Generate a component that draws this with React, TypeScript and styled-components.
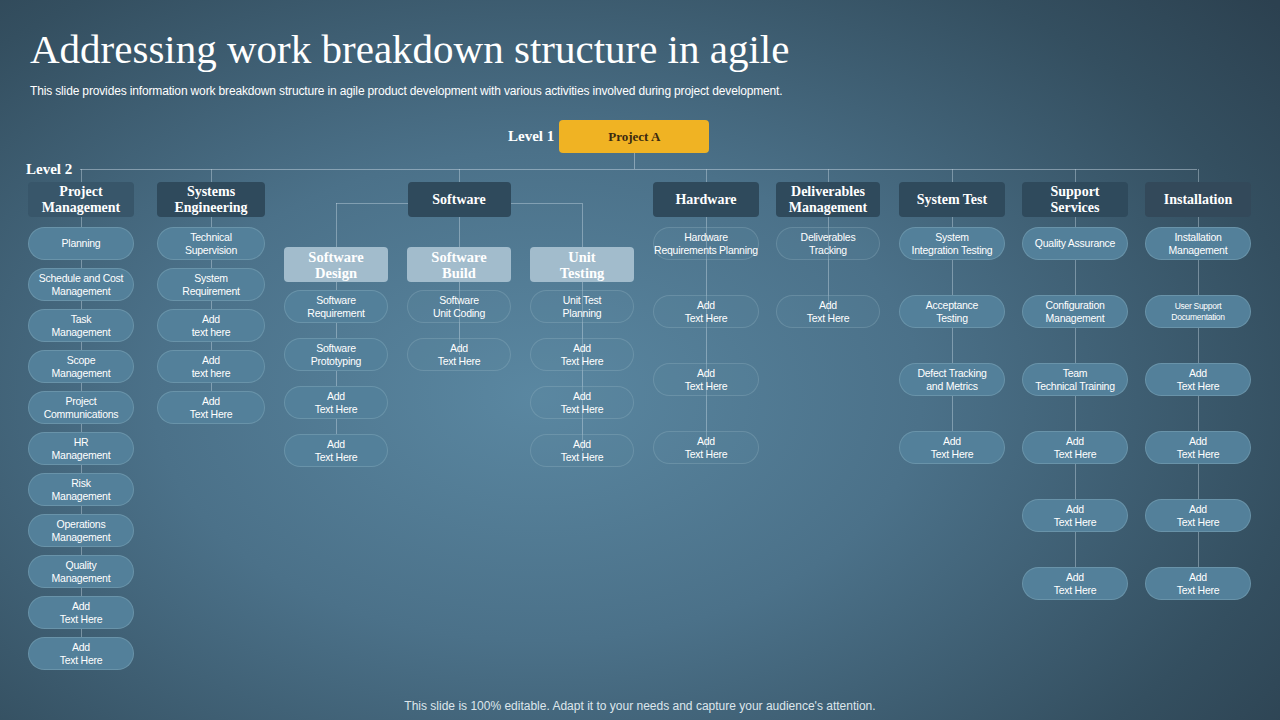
import React from "react";
import styled, { createGlobalStyle } from "styled-components";

const Global = createGlobalStyle`
  html, body { margin: 0; padding: 0; }
  body { width: 1280px; height: 720px; overflow: hidden; }
`;

const Slide = styled.div`
  width: 1280px; height: 720px; box-sizing: border-box; position: relative;
  background: radial-gradient(ellipse 75% 85% at 42% 55%, #5a87a1 0%, #4b7189 40%, #344f60 80%, #2c4150 100%);
  color: #fff; font-family: "Liberation Sans", Arial, sans-serif;
  padding: 27px 0 0 0; display: flex; flex-direction: column;
`;
const Title = styled.h1`
  margin: 0 0 0 30px; font-family: "Liberation Serif", serif; font-weight: normal;
  font-size: 41px; line-height: 44px; color: #fff;
`;
const Sub = styled.p`
  margin: 13px 0 0 30px; font-size: 12px; letter-spacing: -0.15px; color: #fff; line-height: 14px;
`;
const LevelRow = styled.div`
  display: flex; align-items: center; margin: 22px 0 0 508px; gap: 5px;
`;
const LevelLabel = styled.span`
  font-family: "Liberation Serif", serif; font-weight: bold; font-size: 15px; color: #fff;
`;
const Project = styled.div`
  position: relative; width: 150px; height: 33px; border-radius: 4px; background: #f0b323;
  display: flex; align-items: center; justify-content: center;
  font-family: "Liberation Serif", serif; font-weight: bold; font-size: 13px; color: #3b2a10;
  &::after { content: ""; position: absolute; left: 75px; top: 33px; width: 1px; height: 16px; background: rgba(210,225,235,.45); }
`;
const Chart = styled.div`
  position: relative; margin-top: 16px; padding-left: 28px; display: grid;
  grid-template-columns: 110px 108px 350px 104px 104px 104px 104px 106px; column-gap: 19px; align-items: start;
  &::before { content: ""; position: absolute; top: 0; left: 80px; width: 1117px; height: 1px; background: rgba(210,225,235,.45); }
`;
const Level2 = styled.span`
  position: absolute; left: 26px; top: -8px; font-family: "Liberation Serif", serif; font-weight: bold; font-size: 15px;
`;
const Col = styled.div<{ $w: number; $gap: number; $pad?: number }>`
  position: relative; width: ${p => p.$w}px; display: flex; flex-direction: column; align-items: stretch;
  padding-top: ${p => p.$pad ?? 13}px; gap: ${p => p.$gap}px;
  & > :nth-child(2) { margin-top: ${p => 10 - p.$gap}px; }
  &::before { content: ""; position: absolute; left: 50%; top: 0; bottom: 16px; width: 1px; background: rgba(210,225,235,.4); }
`;
const Header = styled.div<{ $tone?: string }>`
  position: relative; z-index: 1; height: 35px; border-radius: 4px; background: ${p => p.$tone ?? "#2f4a5c"};
  display: flex; align-items: center; justify-content: center; text-align: center;
  font-family: "Liberation Serif", serif; font-weight: bold; font-size: 14px; line-height: 16px; color: #fff;
`;
const SubHeader = styled(Header)`
  background: #a2bccc; font-size: 14.5px;
`;
const Pill = styled.div<{ $outline?: boolean; $small?: boolean }>`
  position: relative; z-index: 1; height: 33px; box-sizing: border-box; border-radius: 17px;
  display: flex; align-items: center; justify-content: center; text-align: center; white-space: nowrap;
  font-size: ${p => (p.$small ? 8.5 : 10.5)}px; letter-spacing: ${p => (p.$small ? -0.3 : -0.25)}px;
  line-height: ${p => (p.$small ? 11 : 12.5)}px; color: #fff;
  background: ${p => (p.$outline ? "rgba(90,135,160,.25)" : "#53809a")};
  border: 1px solid ${p => (p.$outline ? "rgba(200,220,230,.18)" : "rgba(120,160,180,.6)")};
`;
const Group = styled.div`
  display: flex; flex-direction: column; align-items: center; padding-top: 13px;
  position: relative;
  &::before { content: ""; position: absolute; left: 50%; top: 0; height: 13px; width: 1px; background: rgba(210,225,235,.4); }
`;
const SubRow = styled.div`
  position: relative; margin-top: -14px; display: grid; grid-template-columns: repeat(3, 104px); column-gap: 19px;
  align-items: start;
  &::before { content: ""; position: absolute; top: 0; left: 52px; right: 52px; height: 1px; background: rgba(210,225,235,.4); }
`;
const SubCol = styled(Col)`
  & > :nth-child(2) { margin-top: -7px; }
`;
const Footer = styled.div`
  position: absolute; left: 0; right: 0; bottom: 7px; text-align: center; font-size: 12px; color: #dde6ec;
`;

const L = (s: string) => s.split("\n").map((t, i) => <React.Fragment key={i}>{i > 0 && <br />}{t}</React.Fragment>);
const ADD = "Add\nText Here";

type P = { t: string; o?: boolean; s?: boolean };
const pills = (arr: P[]) => arr.map((p, i) => <Pill key={i} $outline={p.o} $small={p.s}>{L(p.t)}</Pill>);

export default function App() {
  const pm = ["Planning", "Schedule and Cost\nManagement", "Task\nManagement", "Scope\nManagement", "Project\nCommunications", "HR\nManagement", "Risk\nManagement", "Operations\nManagement", "Quality\nManagement", ADD, ADD];
  const se = ["Technical\nSupervision", "System\nRequirement", "Add\ntext here", "Add\ntext here", ADD];
  return (
    <Slide>
      <Global />
      <Title>Addressing work breakdown structure in agile</Title>
      <Sub>This slide provides information work breakdown structure in agile product development with various activities involved during project development.</Sub>
      <LevelRow><LevelLabel>Level 1</LevelLabel><Project>Project A</Project></LevelRow>
      <Chart>
        <Level2>Level 2</Level2>
        <Col $w={106} $gap={8}>
          <Header $tone="#38566a">{L("Project\nManagement")}</Header>
          {pills(pm.map(t => ({ t })))}
        </Col>
        <Col $w={108} $gap={8}>
          <Header>{L("Systems\nEngineering")}</Header>
          {pills(se.map(t => ({ t })))}
        </Col>
        <Group>
          <Header style={{ width: 103 }}>Software</Header>
          <SubRow>
            <SubCol $w={104} $gap={15} $pad={44}>
              <SubHeader>{L("Software\nDesign")}</SubHeader>
              {pills([{ t: "Software\nRequirement" }, { t: "Software\nPrototyping" }, { t: ADD }, { t: ADD }])}
            </SubCol>
            <SubCol $w={104} $gap={15} $pad={44}>
              <SubHeader>{L("Software\nBuild")}</SubHeader>
              {pills([{ t: "Software\nUnit Coding", o: true }, { t: ADD, o: true }])}
            </SubCol>
            <SubCol $w={104} $gap={15} $pad={44}>
              <SubHeader>{L("Unit\nTesting")}</SubHeader>
              {pills([{ t: "Unit Test\nPlanning", o: true }, { t: ADD, o: true }, { t: ADD, o: true }, { t: ADD, o: true }])}
            </SubCol>
          </SubRow>
        </Group>
        <Col $w={106} $gap={35}>
          <Header>Hardware</Header>
          {pills([{ t: "Hardware\nRequirements Planning", o: true }, { t: ADD, o: true }, { t: ADD, o: true }, { t: ADD, o: true }])}
        </Col>
        <Col $w={104} $gap={35}>
          <Header>{L("Deliverables\nManagement")}</Header>
          {pills([{ t: "Deliverables\nTracking", o: true }, { t: ADD, o: true }])}
        </Col>
        <Col $w={106} $gap={35}>
          <Header>System Test</Header>
          {pills([{ t: "System\nIntegration Testing" }, { t: "Acceptance\nTesting" }, { t: "Defect Tracking\nand Metrics" }, { t: ADD }])}
        </Col>
        <Col $w={106} $gap={35}>
          <Header>{L("Support\nServices")}</Header>
          {pills([{ t: "Quality Assurance" }, { t: "Configuration\nManagement" }, { t: "Team\nTechnical Training" }, { t: ADD }, { t: ADD }, { t: ADD }])}
        </Col>
        <Col $w={106} $gap={35}>
          <Header $tone="#33495a">Installation</Header>
          {pills([{ t: "Installation\nManagement" }, { t: "User Support\nDocumentation", s: true }, { t: ADD }, { t: ADD }, { t: ADD }, { t: ADD }])}
        </Col>
      </Chart>
      <Footer>This slide is 100% editable. Adapt it to your needs and capture your audience's attention.</Footer>
    </Slide>
  );
}
